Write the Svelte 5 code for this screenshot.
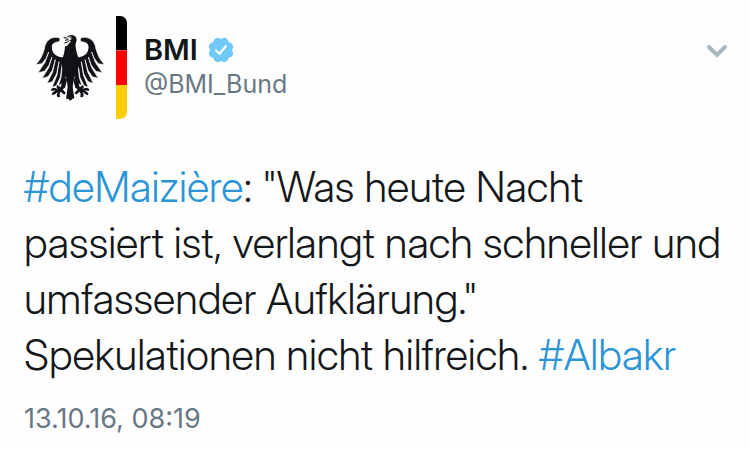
<script lang="ts">
  const name = "BMI";
  const handle = "@BMI_Bund";
  const date = "13.10.16, 08:19";

  // one scalloped edge of the verified badge per entry
  const lobes = Array.from({ length: 8 }, (_, i) => {
    const a = (i * Math.PI) / 4 + Math.PI / 8;
    return { x: 12 + 7.8 * Math.cos(a), y: 12 + 7.8 * Math.sin(a) };
  });
</script>

<article class="tweet">
  <header class="tweet-header">
    <svg class="avatar" viewBox="48 33 276 312" role="img" aria-label="Bundesadler">
      <defs>
        <g id="wing">
          <path
            class="feathers"
            d="M117 98C123 104 119 111 112 111C104 112 99 115 97 123C96 137 108 151 134 155L142 168L137 222L126 236L115 242L123 218L127 177L121 217L109 242L96 247L111 210L117 170L110 206L97 230L81 235L98 201L106 164L97 196L84 215L66 220L86 188L96 156L87 181L73 199L54 203L75 172L86 141L79 159L66 176L46 179C60 168 67 152 73 132C76 109 91 93 117 98Z"
          />
          <path
            class="gap"
            d="M104 114C100 128 109 144 134 151L134 157C108 158 94 143 96 125C97 118 100 115 104 114Z"
          />
        </g>
        <g id="talon">
          <path
            d="M130 217L142 222L135 248L128 253L137 263L133 269L122 260L119 266L120 276L113 277L110 271L113 261L106 267L97 271L96 264L107 256L95 258L93 252L101 248L114 251L109 247L112 240L122 247Z"
          />
        </g>
      </defs>
      <use href="#wing" />
      <use href="#wing" transform="translate(301 0) scale(-1 1)" />
      <use href="#talon" />
      <use href="#talon" transform="translate(301 0) scale(-1 1)" />
      <path
        d="M144 93C152 87 166 90 169 99C172 108 165 115 167 126C169 143 174 153 178 170C178 190 169 204 161 222L158 247L163 279L157 282L151 287L145 282L138 281L143 247L140 222C132 204 125 190 125 170C129 154 134 143 135 125L143 121L148 111L139 105L132 98Z"
      />
      <path
        class="face"
        d="M132 99L138 93L150 93L156 97L150 99L156 102L150 105L152 110L145 117L138 121L142 114L134 119L139 110L132 110L139 105Z"
      />
      <path class="beak" d="M131 98L140 99L145 104L135 106M133 114L143 111L149 106M142 94L152 97" />
      <path d="M288 33H300Q321 34 321 57V136H288Z" fill="#000" />
      <path d="M288 136H321V240H288Z" fill="#f00" />
      <path d="M288 240H321V319Q321 341 300 342H288Z" fill="#ffcc05" />
    </svg>

    <div class="author">
      <div class="name-row">
        <strong class="name">{name}</strong>
        <svg class="badge" viewBox="0 0 24 24" role="img" aria-label="Verifiziert">
          <circle cx="12" cy="12" r="10" />
          {#each lobes as lobe}
            <circle cx={lobe.x} cy={lobe.y} r="4" />
          {/each}
          <path d="M7.5 12.5L10.6 15.5L16.5 8.5" />
        </svg>
      </div>
      <a class="handle" href="#profile">{handle}</a>
    </div>

    <button class="more" type="button" aria-label="Mehr">
      <svg viewBox="0 0 22 14" aria-hidden="true">
        <path d="M3 3L11 11L19 3" />
      </svg>
    </button>
  </header>

  <p class="text">
    <a href="#deMaiziere">#deMaizière</a>: "Was heute Nacht passiert ist, verlangt nach schneller und
    umfassender Aufklärung."<br />Spekulationen nicht hilfreich. <a href="#Albakr">#Albakr</a>
  </p>

  <time class="date" datetime="2016-10-13T08:19">{date}</time>
</article>

<style>
  :global(body) {
    margin: 0;
    background: #fefefe;
  }

  .tweet {
    padding: 16px 22px 16px 24px;
    color: #14171a;
    font-family: Inter, "Liberation Sans", sans-serif;
  }

  .tweet-header {
    display: flex;
    align-items: flex-start;
    gap: 16px;
    padding-left: 12px;
  }

  .avatar {
    flex: none;
    width: 92px;
    height: 104px;
    fill: #111216;
  }

  .feathers {
    stroke: #fefefe;
    stroke-width: 2;
  }

  .gap,
  .face {
    fill: #fefefe;
  }

  .beak {
    fill: none;
    stroke: #111216;
    stroke-width: 3;
  }

  .author {
    flex: 1;
    padding-top: 17px;
  }

  .name-row {
    display: flex;
    align-items: center;
    gap: 10px;
  }

  .name {
    font-size: 29px;
    font-weight: 600;
    line-height: 34px;
  }

  .badge {
    width: 26px;
    height: 26px;
    fill: #71c9f8;
  }

  .badge path {
    fill: none;
    stroke: #fff;
    stroke-width: 2;
    stroke-linecap: round;
    stroke-linejoin: round;
  }

  .handle {
    color: #697885;
    font-size: 25px;
    line-height: 34px;
    text-decoration: none;
  }

  .more {
    margin-top: 24px;
    padding: 4px 0;
    border: 0;
    background: none;
    cursor: pointer;
  }

  .more svg {
    display: block;
    width: 22px;
    height: 14px;
    fill: none;
    stroke: #aab8c2;
    stroke-width: 4;
    stroke-linecap: round;
  }

  .text {
    margin: 39px 0 0;
    font-family: "Inter Display", Inter, "Liberation Sans", sans-serif;
    font-size: 42px;
    font-weight: 300;
    line-height: 56px;
  }

  .text a {
    color: #2b95d6;
    text-decoration: none;
  }

  .date {
    display: block;
    margin-top: 20px;
    color: #697885;
    font-size: 27px;
    line-height: 32px;
  }
</style>
